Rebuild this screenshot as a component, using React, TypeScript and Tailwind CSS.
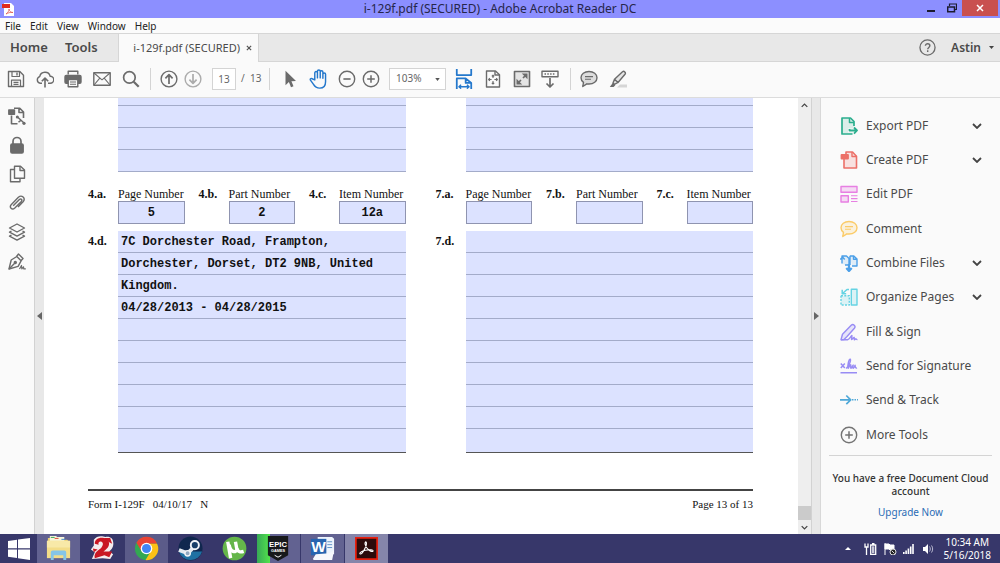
import React from 'react';

interface IconProps {
  children: React.ReactNode;
  size?: string;
  color?: string;
}

interface Tool {
  label: string;
  icon: React.ReactNode;
  color: string;
  expandable?: boolean;
}

const Icon: React.FC<IconProps> = ({ children, size = 'size-[18px]', color = 'text-[#6b6b6b]' }) => (
  <svg
    className={`shrink-0 ${size} ${color}`}
    viewBox="0 0 18 18"
    fill="none"
    stroke="currentColor"
    strokeWidth={1.4}
    strokeLinejoin="round"
    aria-hidden="true"
  >
    {children}
  </svg>
);

const icons = {
  save: (
    <>
      <path d="M1.5 1.5h11.3l3.7 3.7v11.3h-15z" />
      <path d="M5 1.5v5h7.5v-5M4.5 16.5v-6.3h9v6.3M6.5 12.3h5M6.5 14.4h5" strokeWidth={1.2} />
      <path d="M10 2.5v3" />
    </>
  ),
  upload: (
    <>
      <path d="M6 13.2H4.2a3.4 3.4 0 0 1-.5-6.6 5.4 5.4 0 0 1 10.5-.4 3.5 3.5 0 0 1 .1 7H12" />
      <path d="M9 17.5V8.3M5.8 11.3 9 8.1l3.2 3.2" strokeWidth={1.6} />
    </>
  ),
  print: (
    <>
      <path d="M4.2 4.6V1.2h9.6v3.4" />
      <rect x="1" y="5.5" width="16" height="7.8" rx="1.2" fill="currentColor" />
      <path d="M4.2 9.5h9.6v7.2H4.2z" fill="#fafafa" />
      <path d="M6 12h6M6 14.3h6" strokeWidth={1.1} />
    </>
  ),
  mail: (
    <>
      <path d="M.8 2.8h16.4v12.4H.8z" />
      <path d="m1 3 8 6.8L17 3M1 15l5.8-6.8M17 15l-5.8-6.8" strokeWidth={1.1} />
    </>
  ),
  search: (
    <>
      <circle cx="7.4" cy="7.4" r="5.8" strokeWidth={1.7} />
      <path d="m11.7 11.7 5 5" strokeWidth={2.2} />
    </>
  ),
  up: (
    <>
      <circle cx="9" cy="9" r="7.9" />
      <path d="M9 14V4.8M5.4 8.3 9 4.7l3.6 3.6" strokeWidth={1.7} />
    </>
  ),
  down: (
    <>
      <circle cx="9" cy="9" r="7.9" />
      <path d="M9 4v9.2M5.4 9.7 9 13.3l3.6-3.6" strokeWidth={1.7} />
    </>
  ),
  pointer: <path d="M4.5.8v14.4l3.4-3.1 2.1 5.1 2.5-1-2.1-5 4.6-.3z" fill="currentColor" stroke="none" />,
  hand: (
    <path
      d="M5.2 9.8V3.5a1.2 1.2 0 0 1 2.4 0V8 2.1a1.2 1.2 0 0 1 2.5 0V8 2.8a1.2 1.2 0 0 1 2.4 0v5.6-3.6a1.2 1.2 0 0 1 2.4 0v6.6c0 3.6-2 5.8-5.2 5.8-3 0-4.3-1-5.8-3.6L1.3 10c-.6-1.2 1-2 1.9-1z"
      strokeWidth={1.3}
    />
  ),
  minus: (
    <>
      <circle cx="9" cy="9" r="7.7" />
      <path d="M5.4 9h7.2" strokeWidth={1.6} />
    </>
  ),
  plus: (
    <>
      <circle cx="9" cy="9" r="7.7" />
      <path d="M5.2 9h7.6M9 5.2v7.6" strokeWidth={1.5} />
    </>
  ),
  fitWidth: (
    <>
      <path d="M2.5 0v5.5h13V0M2.5 18V8.500h8l5 4V18M10.500 8.500v4h5" strokeWidth={1.6} />
      <path d="M4.5 16h9M6.4 14.2l-2 1.8 2 1.7M11.6 14.2l2 1.8-2 1.7" strokeWidth={1.2} />
    </>
  ),
  fitPage: (
    <>
      <path d="M2.5 1h9l4 3.7V17h-13z" />
      <path d="M11 1v4h4.5" />
      <path
        d="M9 5.200V8M9 11v3M4.6 9.500h3M10.400 9.500h3M7.800 6.400 9 5.200l1.200 1.200M7.800 12.800 9 14l1.200-1.200M5.900 8.200 4.600 9.500l1.300 1.300M12.100 8.200l1.300 1.300-1.300 1.300"
        strokeWidth={1.1}
      />
    </>
  ),
  fullscreen: (
    <>
      <path d="M1.5 1.5h15v15h-15z" fill="currentColor" fillOpacity={0.15} strokeWidth={1.6} />
      <path d="M8.8 3.5h5.7v5.7zM3.5 8.8v5.7h5.7z" fill="currentColor" stroke="none" />
      <path d="m10 8 3-3M8 10l-3 3" strokeWidth={1.7} />
    </>
  ),
  scroll: (
    <>
      <path d="M1 1.2h16v5.6H1z" />
      <path d="M3.5 4h11" strokeWidth={1.7} strokeDasharray="1.5 1.3" />
      <path d="M9 8v9M5.5 13.5 9 17l3.5-3.5" strokeWidth={1.7} />
    </>
  ),
  comment: (
    <>
      <path
        d="M9 1.5c4.6 0 8 2.6 8 6.3S13.6 14 9 14c-.8 0-1.5 0-2.2-.2L2.800 16.500l.7-4.100C2 11.300 1 9.700 1 7.800c0-3.700 3.400-6.300 8-6.300z"
        fill="currentColor"
        fillOpacity={0.2}
      />
      <path d="M5 6.6h8M5 9.2h6" strokeWidth={1.1} />
    </>
  ),
  highlight: (
    <>
      <path d="M8 17.5h10v-3h-7z" fill="#d6d6d6" stroke="none" />
      <path d="m5.5 9.2 8-7.5c1.6-1.200 3.700 1 2.500 2.500L9 12.500zM5.500 9.200 4 13l1.400 1.400L9 12.500" fill="#e4e4e4" />
      <path d="m3.7 13-2.900 4h3.800l1.700-1.700z" fill="currentColor" stroke="none" />
    </>
  ),
  exportRail: (
    <>
      <path d="M6 1.2h5.8L15.500 5v6M11 1.200v4.300h4.500M3.500 8.500v8.300h6" strokeWidth={1.6} />
      <path d="M.8 3h5.700v4.200H.8z" fill="currentColor" />
      <path d="m9 9.500 7 6.500M13.500 13l-3 2.200" strokeWidth={1.5} />
      <circle cx="9.300" cy="10" r="1.500" fill="currentColor" stroke="none" />
      <circle cx="16" cy="16.300" r="1.600" fill="currentColor" stroke="none" />
    </>
  ),
  lock: (
    <>
      <path d="M5 8V5.500a4 4 0 0 1 8 0V8" strokeWidth={1.7} />
      <rect x="2.8" y="8" width="12.400" height="9" rx="1.300" fill="currentColor" />
    </>
  ),
  pages: (
    <>
      <path d="M6.500 1.200h6L16.500 5v8.200h-10z" />
      <path d="M12 1.200v4.300h4.500M6.500 4.500h-4v12.300h9.500v-3.500" />
    </>
  ),
  clip: (
    <path
      d="m5.200 11.800 6.200-6.300c1.500-1.400 3.300.4 1.900 1.900l-6.500 6.500c-2.800 2.600-6-.6-3.400-3.400l7-7.200c3.400-3 7.600 1 4.700 4.400L10 13"
      strokeWidth={1.4}
    />
  ),
  layers: (
    <>
      <path d="m9 1 7.500 4L9 9 1.500 5z" />
      <path d="m3.500 8-2 1.100 7.500 4 7.500-4-2-1.100M3.500 12l-2 1.100 7.500 4 7.500-4-2-1.100" />
    </>
  ),
  pen: (
    <>
      <path d="M1 17 3.200 8l5.600-3.500 4.300 4.300-3 5.500zM8.500 4.500l2-2.500 4.500 4.500-2 2.300" />
      <path d="m1 17 5.700-5.800" />
      <circle cx="7.300" cy="10.500" r="1" fill="currentColor" />
      <path d="m11.500 17 2-3.500.3 3.300 1.700-2 .3 2h2" strokeWidth={1.2} />
    </>
  ),
  exportPdf: (
    <>
      <path d="M12.500 17H2V1h8.500L14 4.500V9" fill="currentColor" fillOpacity={0.15} strokeWidth={1.7} />
      <path d="M9.500 1v4.500H14" strokeWidth={1.5} />
      <path d="M8 13.500h9M14 10.500l3 3-3 3.200" stroke="#fafafa" strokeWidth={4} />
      <path d="M9.500 12v1.500H17M14 10.500l3 3-3 3.200" strokeWidth={1.8} />
    </>
  ),
  createPdf: (
    <>
      <path d="M4 8v9h12.500V5.200L12.500 1H6v5" fill="currentColor" fillOpacity={0.18} strokeWidth={1.6} />
      <path d="M12 1v4.500h4.500" />
      <path d="M1.500 4H8v3.500H1.500z" fill="currentColor" strokeWidth={1.8} />
    </>
  ),
  editPdf: (
    <>
      <path d="M1 1.500h16v5.800H1zM1 10.800h7.300V17H1z" fill="currentColor" fillOpacity={0.25} />
      <path d="M11 10.800h6.500M11 13.600h6.500M11 16.500h6.500" strokeWidth={1.1} />
    </>
  ),
  combine: (
    <>
      <path
        d="M2 9.500V2h4.500L9 4.500V11H5M9.800 2h4L17 5v7h-5M10 2v9M13.500 2v3.300H17M.3 5.500 2.500 3l2.200 2.500"
        fill="currentColor"
        fillOpacity={0.15}
      />
      <path d="M9 10v7M6.300 14 9 17l2.700-3" strokeWidth={2.2} />
    </>
  ),
  organize: (
    <>
      <path d="M1 7.800h8.300V17H1z" fill="currentColor" fillOpacity={0.2} strokeDasharray="2 1.3" />
      <path d="M11.300 1.300H17V17h-5.700z" fill="currentColor" fillOpacity={0.2} />
      <path d="M9 1.500H7L2.800 5.300M2.200 1.800v4h4" strokeWidth={1.5} />
    </>
  ),
  fillSign: (
    <>
      <path d="m1 16.800 1.500-5.600 8.700-9c2-1.800 5 .8 3.200 3L7 13.500l-3 3z" fill="currentColor" fillOpacity={0.2} />
      <path d="M1 16.800h6.500c2.200-.5 2.700-3 4.300-4.300.8.4-.7 2.700-.2 4.100 1-.2 1.500-2 2.500-2.300.7.3-.3 1.900.2 2.400.8-.2 1.300-1 1.700-.9.300.4.800.9 1.500.8" />
    </>
  ),
  signature: (
    <>
      <path d="m.8 6.500 4 4.500M4.800 6.500l-4 4.500M.5 15.700H17" strokeWidth={1.5} />
      <path d="M6 11.500c2.500-1.500 5.300-8 4.300-9.300-1.300-.8-3 6.500-2.300 8.800.5 1.200 1.500-3.300 2.700-3.200.8.200-.7 3.300.2 3.600 1 0 1.700-3 2.300-3.300-.4 1.300-.3 3 .2 3.200.8 0 1.500-3 1.700-3-.1 1.700.6 3.200 1.900 2.700" />
    </>
  ),
  track: (
    <>
      <path d="M0 8.800h10M6.300 4.500l4.400 4.300-4.400 4.300" strokeWidth={1.7} />
      <path d="M12 8.800h6" strokeDasharray="1.5 1" />
    </>
  ),
};

const menus = ['File', 'Edit', 'View', 'Window', 'Help'];

const railItems = [
  { label: 'Export', icon: icons.exportRail },
  { label: 'Security', icon: icons.lock },
  { label: 'Page thumbnails', icon: icons.pages },
  { label: 'Attachments', icon: icons.clip },
  { label: 'Layers', icon: icons.layers },
  { label: 'Signatures', icon: icons.pen },
];

const tools: Tool[] = [
  { label: 'Export PDF', icon: icons.exportPdf, color: 'text-[#2cae8e]', expandable: true },
  { label: 'Create PDF', icon: icons.createPdf, color: 'text-[#ec7068]', expandable: true },
  { label: 'Edit PDF', icon: icons.editPdf, color: 'text-[#e77fe2]' },
  { label: 'Comment', icon: icons.comment, color: 'text-[#fbcb68]' },
  { label: 'Combine Files', icon: icons.combine, color: 'text-[#4b9fe8]', expandable: true },
  { label: 'Organize Pages', icon: icons.organize, color: 'text-[#65d3e3]', expandable: true },
  { label: 'Fill & Sign', icon: icons.fillSign, color: 'text-[#988cf4]' },
  { label: 'Send for Signature', icon: icons.signature, color: 'text-[#988cf4]' },
  { label: 'Send & Track', icon: icons.track, color: 'text-[#4fa8d8]' },
  { label: 'More Tools', icon: icons.plus, color: 'text-[#747474]' },
];

const notes = `7C Dorchester Road, Frampton,
Dorchester, Dorset, DT2 9NB, United
Kingdom.
04/28/2013 - 04/28/2015`;

const ToolButton: React.FC<{ label: string; width?: string; color?: string; size?: string; children: React.ReactNode }> = ({
  label,
  width = 'w-7',
  color,
  size,
  children,
}) => (
  <button type="button" aria-label={label} className={`flex h-7 items-center justify-center ${width}`}>
    <Icon color={color} size={size}>{children}</Icon>
  </button>
);

const Separator = () => <span className="mx-[6px] h-[22px] w-px bg-[#d4d4d4]" />;

const Chevron: React.FC<{ size?: string; flip?: boolean }> = ({ size = 'h-[6px] w-[10px]', flip }) => (
  <svg className={`${size} ${flip ? 'rotate-180' : ''}`} viewBox="0 0 10 6" fill="none" stroke="#444" strokeWidth={1.8}>
    <path d="m1 1 4 4 4-4" />
  </svg>
);

const PdfLogo: React.FC<{ className: string }> = ({ className }) => (
  <svg className={className} viewBox="0 0 22 22" fill="none" aria-hidden="true">
    <path d="M.8.8h20.4v20.4H.8z" fill="#2c0b0b" stroke="#e8200f" strokeWidth={1.7} />
    <path
      d="M5 16.200c-1.400-.8 1.200-2.600 5-3.500 4.200-1 7.500-.4 7.200.7-.5 1.600-6-1-7.500-6.400-.5-2 .8-3.200 1.200-1.400.5 2.800-4 11.300-5.900 10.600z"
      stroke="#fff"
      strokeWidth={1.1}
    />
  </svg>
);

const TitleBar = () => (
  <header className="grid h-[18px] grid-cols-[1fr_auto_1fr] items-center bg-[#8c8fff]">
    <svg className="ml-[2px] size-[13px]" viewBox="0 0 13 13" aria-hidden="true">
      <path d="M2 0h7l3 3v10H2z" fill="#fff" />
      <path d="M0 1h8v4H0z" fill="#e02a1d" />
      <path d="M4 11c2-1.500 3-3 3-5 .5 2.500 2 3.500 4 3.500-3-.5-5 .5-7 1.500z" fill="none" stroke="#e05a50" strokeWidth={0.8} />
    </svg>
    <h1 className="text-xs leading-[18px] text-[#26264a]">i-129f.pdf (SECURED) - Adobe Acrobat Reader DC</h1>
    <div className="flex h-full items-start justify-end pr-[2px]">
      <button type="button" aria-label="Minimize" className="flex h-4 w-5 items-center justify-center">
        <svg className="size-[10px]" viewBox="0 0 10 10"><path d="M1 7h8v2H1z" fill="#1c1c30" /></svg>
      </button>
      <button type="button" aria-label="Restore" className="flex h-4 w-[21px] items-center justify-center">
        <svg className="size-[10px]" viewBox="0 0 10 10" fill="none" stroke="#1c1c30">
          <path d="M2.5 3V1h7v5.500H8" strokeWidth={1.2} />
          <path d="M.7 4h6.800v4.800H.7z" strokeWidth={1.5} />
        </svg>
      </button>
      <button type="button" aria-label="Close" className="flex h-4 w-9 items-center justify-center bg-[#c9504f]">
        <svg className="size-2" viewBox="0 0 8 8" stroke="#fff" strokeWidth={1.5}><path d="m1 1 6 6M7 1 1 7" /></svg>
      </button>
    </div>
  </header>
);

const MenuBar = () => (
  <nav className="flex h-[15px] items-end gap-[9px] bg-[#fbfbfb] px-[5px]">
    {menus.map((menu) => (
      <button key={menu} type="button" className="text-[10px] leading-[14px] text-[#222]">
        {menu}
      </button>
    ))}
  </nav>
);

const TabBar = () => (
  <div className="flex h-[29px] items-stretch border-y border-[#d6d6d6] bg-[#e8e8e8] text-[#4a4a4a]">
    <div className="flex w-[118px] items-center gap-[17px] pl-[10px] text-[13px] font-semibold">
      <button type="button">Home</button>
      <button type="button">Tools</button>
    </div>
    <div className="-mb-px flex w-[141px] items-center justify-end gap-[6px] border-x border-[#d6d6d6] bg-[#fafafa] pr-[6px]">
      <button type="button" className="text-[11px] whitespace-nowrap">i-129f.pdf (SECURED)</button>
      <button type="button" aria-label="Close tab">
        <svg className="size-[6px]" viewBox="0 0 7 7" stroke="#555" strokeWidth={1.4}><path d="m1 1 5 5M6 1 1 6" /></svg>
      </button>
    </div>
    <div className="ml-auto flex items-center pr-[6px]">
      <button type="button" aria-label="Help" className="mr-[15px]">
        <Icon size="size-[17px]">
          <circle cx="9" cy="9" r="8" />
          <path d="M6.800 7.200c0-3 4.700-2.800 4.700 0 0 1.700-2.300 1.800-2.300 3.600M9.200 12v1.700" strokeWidth={1.5} />
        </Icon>
      </button>
      <button type="button" className="flex items-center gap-2 text-xs font-semibold">
        Astin
        <svg className="h-[3px] w-[5px]" viewBox="0 0 5 3"><path d="M0 0h5L2.500 3z" fill="#444" /></svg>
      </button>
    </div>
  </div>
);

const Toolbar = () => (
  <div className="flex h-9 items-center border-b border-[#dcdcdc] bg-[#fafafa] pb-[2px] pl-[2px] text-[10px] text-[#666]">
    <div className="flex gap-px">
      <ToolButton label="Save">{icons.save}</ToolButton>
      <ToolButton label="Upload">{icons.upload}</ToolButton>
      <ToolButton label="Print" width="w-[26px]">{icons.print}</ToolButton>
      <ToolButton label="Email" width="w-[30px]">{icons.mail}</ToolButton>
      <ToolButton label="Find" width="w-[26px]">{icons.search}</ToolButton>
    </div>
    <Separator />
    <ToolButton label="Previous page" width="w-6">{icons.up}</ToolButton>
    <ToolButton label="Next page" width="w-6" color="text-[#ababab]">{icons.down}</ToolButton>
    <input
      aria-label="Page number"
      defaultValue="13"
      className="ml-[7px] h-[22px] w-6 border border-[#d4d4d4] bg-white text-center"
    />
    <span className="ml-[5px] w-[22px] whitespace-pre">/  13</span>
    <Separator />
    <ToolButton label="Select">{icons.pointer}</ToolButton>
    <ToolButton label="Pan" width="w-[30px]" color="text-[#2478cc]" size="size-5">{icons.hand}</ToolButton>
    <ToolButton label="Zoom out" width="w-[25px]">{icons.minus}</ToolButton>
    <ToolButton label="Zoom in" width="w-[23px]">{icons.plus}</ToolButton>
    <div className="relative ml-[7px]">
      <select aria-label="Zoom level" className="h-[22px] w-[57px] appearance-none border border-[#d4d4d4] bg-white pl-[6px]">
        <option>103%</option>
      </select>
      <svg className="pointer-events-none absolute top-[10px] right-[6px] h-[3px] w-[5px]" viewBox="0 0 6 4">
        <path d="M0 0h6L3 4z" fill="#555" />
      </svg>
    </div>
    <div className="ml-1 flex">
      <ToolButton label="Fit width" color="text-[#2478cc]" size="size-5">{icons.fitWidth}</ToolButton>
      <ToolButton label="Fit page" width="w-[30px]">{icons.fitPage}</ToolButton>
      <ToolButton label="Full screen">{icons.fullscreen}</ToolButton>
      <ToolButton label="Read mode">{icons.scroll}</ToolButton>
    </div>
    <Separator />
    <ToolButton label="Comment" width="w-6">{icons.comment}</ToolButton>
    <ToolButton label="Highlight" width="w-[34px]">{icons.highlight}</ToolButton>
  </div>
);

const field = 'block w-full resize-none overflow-hidden bg-[#dce2ff]';

const FormColumn: React.FC<{ section: string; values: string[]; text?: string }> = ({ section, values, text = '' }) => (
  <div className="min-w-0 flex-1">
    <div className="pl-[30px]">
      <textarea
        aria-label={`${section} previous`}
        className={`${field} h-[74px] bg-[repeating-linear-gradient(to_top,#a3abc9_0,#a3abc9_1px,transparent_1px,transparent_22px)]`}
      />
    </div>
    <div className="mt-[15px] grid grid-cols-3 gap-[14px]">
      {['Page Number', 'Part Number', 'Item Number'].map((name, i) => {
        const id = `${section}-${i}`;
        return (
          <div key={id} className="grid grid-cols-[30px_minmax(0,1fr)] leading-[14px]">
            <span className="font-bold">{section}.{'abc'[i]}.</span>
            <label htmlFor={id} className="whitespace-nowrap">{name}</label>
            <input
              id={id}
              defaultValue={values[i]}
              className="col-start-2 h-[23px] w-full border border-[#8f94b0] bg-[#dce2ff] text-center font-['Liberation_Mono',monospace] text-xs font-bold"
            />
          </div>
        );
      })}
    </div>
    <div className="mt-[7px] flex">
      <label htmlFor={`${section}-d`} className="w-[30px] shrink-0 pt-[2px] font-bold">{section}.d.</label>
      <textarea
        id={`${section}-d`}
        defaultValue={text}
        className={`${field} h-[222px] border-b border-[#555] bg-[repeating-linear-gradient(to_bottom,transparent_0,transparent_21px,#a3abc9_21px,#a3abc9_22px)] bg-[length:100%_219px] bg-no-repeat px-[3px] font-['Liberation_Mono',monospace] text-xs leading-[22px] font-bold`}
      />
    </div>
  </div>
);

const Gutter: React.FC<{ label: string; path: string; width?: string }> = ({ label, path, width = 'w-[9px]' }) => (
  <button type="button" aria-label={label} className={`flex shrink-0 items-center justify-center border-l border-[#d2d2d2] bg-[#e8e8e8] ${width}`}>
    <svg className="h-2 w-[5px]" viewBox="0 0 5 8"><path d={path} fill="#666" /></svg>
  </button>
);

const DocumentView = () => (
  <main className="flex min-w-0 flex-1">
    <article className="min-w-0 flex-1 overflow-hidden bg-white pr-[45px] pl-11 font-['Liberation_Serif',serif] text-xs text-[#111]">
      <div className="flex gap-[30px]">
        <FormColumn section="4" values={['5', '2', '12a']} text={notes} />
        <FormColumn section="7" values={['', '', '']} />
      </div>
      <footer className="mt-9 flex justify-between border-t-2 border-[#444] pt-[6px] text-[11px]">
        <span className="whitespace-pre">Form I-129F   04/10/17   N</span>
        <span>Page 13 of 13</span>
      </footer>
    </article>
    <div className="flex w-[13px] shrink-0 flex-col items-center bg-[#eeeeee]">
      <button type="button" aria-label="Scroll up" className="flex h-[14px] items-center">
        <Chevron size="h-[5px] w-[7px]" flip />
      </button>
      <span className="mt-auto h-[14px] w-full bg-[#cbcbcb]" />
      <button type="button" aria-label="Scroll down" className="flex h-[14px] items-center">
        <Chevron size="h-[5px] w-[7px]" />
      </button>
    </div>
  </main>
);

const ToolsPanel = () => (
  <aside className="w-[180px] shrink-0 border-l border-[#d8d8d8] bg-[#fafafa] pt-[11px] text-[#4a4a4a]">
    <ul>
      {tools.map((tool) => (
        <li key={tool.label} className="[&:nth-child(3n)]:mb-px">
          <button type="button" className="flex h-[34px] w-full items-center gap-2 pr-[18px] pl-[19px] text-xs whitespace-nowrap">
            <Icon color={tool.color}>{tool.icon}</Icon>
            <span className="flex-1 text-left">{tool.label}</span>
            {tool.expandable && <Chevron />}
          </button>
        </li>
      ))}
    </ul>
    <div className="mx-2 mt-[3px] border-t border-[#d4d4d4] pt-4 text-center text-[10px] leading-[13px]">
      <p className="font-medium text-[#333]">You have a free Document Cloud account</p>
      <a href="#upgrade" className="mt-2 inline-block text-[#2a6cb5]">Upgrade Now</a>
    </div>
  </aside>
);

const apps = [
  {
    label: 'File Explorer',
    state: 'bg-[#626291]',
    art: (
      <>
        <path d="M3 3h8l1 2h11l2 2v16H3z" fill="#e8cf74" />
        <path d="M5 1h7v6H5zM12 2h8v6h-8z" fill="#f8f5dc" />
        <path d="M6 2h4v1H6z" fill="#39a852" />
        <path d="M10 3h4v1h-4z" fill="#dc4a30" />
        <path d="M17 4h4v1h-4z" fill="#4286c8" />
        <path d="M2 6h24v18H2z" fill="#f3dd88" />
        <path d="M2 6h24v7H2z" fill="#f8e9a8" />
        <path d="M6 26V18q0-2 2-2h12q2 0 2 2v8h-3v-5H9v5z" fill="#85c5e7" />
      </>
    ),
  },
  {
    label: 'Guild Wars 2',
    state: '',
    art: (
      <>
        <path d="M5 5C8 0 14 1 17 2c5-1 8 2 8 5 1 4-1 8-4 10l4 3-3 5-8-1-11 1 3-7-4-3 3-4z" fill="#f5ecee" />
        <path d="M6 9c0-6 8-8 13-4 4 4 1 9-4 12h9l-3 6-5-2-10 3c-1-5 2-7 6-10 3-3 3-6 1-7s-4 1-3 3z" fill="#c91724" />
        <path d="m15 3 7 0 2 6-4-2zM4 14l5 1-4 3z" fill="#c91724" />
      </>
    ),
  },
  {
    label: 'Chrome',
    state: 'bg-[#5b5b89]',
    art: (
      <>
        <circle cx="14" cy="14" r="12" fill="#33a852" />
        <path d="M3.600 8A12 12 0 0 1 25 9H14l-5 8z" fill="#ea4335" />
        <path d="M25 9a12 12 0 0 1-12 17l6-10-2-7z" fill="#fbc116" />
        <circle cx="14" cy="14" r="6" fill="#fff" />
        <circle cx="14" cy="14" r="4.700" fill="#4285f4" />
      </>
    ),
  },
  {
    label: 'Steam',
    state: '',
    art: (
      <>
        <circle cx="14" cy="14" r="12.500" fill="#10274e" />
        <path d="M2 17a12.500 12.500 0 0 0 24 0z" fill="#1f71a3" />
        <path d="m2 15.500 9 3.500 7-7" fill="none" stroke="#e4eaf0" strokeWidth={4} />
        <circle cx="18.500" cy="10.500" r="4.200" fill="#173e68" stroke="#f1f4f7" strokeWidth={2} />
        <circle cx="11" cy="19" r="2.800" fill="#8fa8c0" stroke="#f1f4f7" strokeWidth={1.5} />
      </>
    ),
  },
  {
    label: 'uTorrent',
    state: '',
    art: (
      <>
        <circle cx="14" cy="14" r="12.300" fill="#65b64a" />
        <path d="m7 7 3 17M8.500 10c1 8 7 9 8 5L15 7M16.500 14c1 4 4 4 7 3" fill="none" stroke="#fff" strokeWidth={3.5} />
      </>
    ),
  },
  {
    label: 'Epic Games',
    state: 'bg-[linear-gradient(90deg,#38a957_0,#52e34b_30%,#626291_31%)]',
    art: (
      <>
        <path d="M3 1h21v20l-10.500 6L3 21z" fill="#17191b" />
        <text x="13.500" y="12" textAnchor="middle" fontSize="8" fontWeight="700" fontFamily="Liberation Sans, sans-serif" fill="#fff">EPIC</text>
        <text x="13.500" y="18" textAnchor="middle" fontSize="4" fontWeight="700" fontFamily="Liberation Sans, sans-serif" fill="#fff">GAMES</text>
        <path d="m10 21 3.500 2 3.500-2" fill="none" stroke="#fff" />
      </>
    ),
  },
  {
    label: 'Word',
    state: 'bg-[#626291]',
    art: (
      <>
        <path d="M9 2h15l2 2v16H9z" fill="#edf4fc" />
        <path d="M19 7h5M19 10h5M19 13h5" stroke="#5e91c6" />
        <path d="M2 4h16v17H2z" fill="#2765b0" />
        <text x="10" y="18" textAnchor="middle" fontSize="16" fontWeight="700" fontFamily="Liberation Sans, sans-serif" fill="#fff">W</text>
        <path d="m4 25 3-5 14-1 5-3-2 10H5z" fill="#f6f8fc" />
      </>
    ),
  },
];

const Taskbar = () => (
  <footer className="flex h-[29px] shrink-0 items-stretch bg-[#37376a] text-white">
    <button type="button" aria-label="Start" className="flex w-[37px] items-center justify-center">
      <svg className="size-[22px]" viewBox="0 0 22 22" fill="#fff">
        <path d="m0 3 9-1.300v8.600H0zM10 1.500 22 0v10.300H10zM0 11.500h9V20l-9-1.300zM10 11.500h12V22l-12-1.700z" />
      </svg>
    </button>
    <div className="flex gap-px">
      {apps.map((app) => (
        <button key={app.label} type="button" aria-label={app.label} className={`flex w-[43px] items-center justify-center ${app.state}`}>
          <svg className="size-[27px]" viewBox="0 0 28 28">{app.art}</svg>
        </button>
      ))}
      <button type="button" aria-label="Acrobat Reader" className="flex w-[43px] items-center justify-center bg-[#8585aa]">
        <PdfLogo className="size-[23px]" />
      </button>
    </div>
    <div className="ml-auto flex items-center pr-[9px]">
      <button type="button" aria-label="Hidden icons" className="mr-[13px]">
        <svg className="h-[3px] w-[6px]" viewBox="0 0 6 3"><path d="m3 0 3 3H0z" fill="#fff" /></svg>
      </button>
      <svg className="mr-[7px] h-3 w-[13px]" viewBox="0 0 13 12" fill="none" stroke="#fff" strokeWidth={1.3} role="img" aria-label="Battery">
        <path d="M6.700 2h5v9.400h-5zM8 .7h2.500M1 .5V4h3V.5M2.500 4v8M1 4h3.500" />
        <path d="M8 3.300h2.400v6.800H8z" fill="#c8c8d8" stroke="none" />
      </svg>
      <svg className="mr-[6px] h-3 w-[13px]" viewBox="0 0 13 12" role="img" aria-label="Action center">
        <path d="M1 0v12M1 1h4l1 1h4v5H6L5 6H1z" fill="#fff" stroke="#fff" />
        <circle cx="9" cy="9" r="3" fill="#222" stroke="#ddd" />
        <path d="m7.500 7.500 3 3" stroke="#ddd" />
      </svg>
      <svg className="mr-[8px] h-[10px] w-[11px]" viewBox="0 0 11 10" fill="#fff" role="img" aria-label="Network">
        <path d="M0 8h1.600v2H0zM2.300 6.500h1.600V10H2.300zM4.600 4.500h1.600V10H4.600zM6.900 2.500h1.600V10H6.900zM9.200 0h1.600v10H9.200z" />
      </svg>
      <svg className="mr-[10px] h-3 w-[12px]" viewBox="0 0 12 12" role="img" aria-label="Volume">
        <path d="M1 4h2l3-3v10L3 8H1z" fill="#fff" />
        <path d="M7.500 3.500c1 1.500 1 3.500 0 5M9.500 2.500c1.500 2 1.500 5 0 7" fill="none" stroke="#b9b9d0" />
      </svg>
      <time dateTime="2018-05-16T10:34" className="text-center text-[10px] leading-[13px]">
        10:34 AM
        <br />
        5/16/2018
      </time>
    </div>
  </footer>
);

export default function App() {
  return (
    <div className="flex h-screen flex-col overflow-hidden bg-[#fafafa] font-['Noto_Sans','Open_Sans',sans-serif]">
      <TitleBar />
      <MenuBar />
      <TabBar />
      <Toolbar />
      <div className="flex min-h-0 flex-1">
        <nav className="flex w-[34px] shrink-0 flex-col items-center gap-px bg-[#fafafa] pt-1">
          {railItems.map((item) => (
            <ToolButton key={item.label} label={item.label}>{item.icon}</ToolButton>
          ))}
        </nav>
        <Gutter label="Expand navigation pane" path="M5 0v8L0 4z" width="w-[10px]" />
        <DocumentView />
        <Gutter label="Collapse tools pane" path="M0 0v8l5-4z" />
        <ToolsPanel />
      </div>
      <Taskbar />
    </div>
  );
}
